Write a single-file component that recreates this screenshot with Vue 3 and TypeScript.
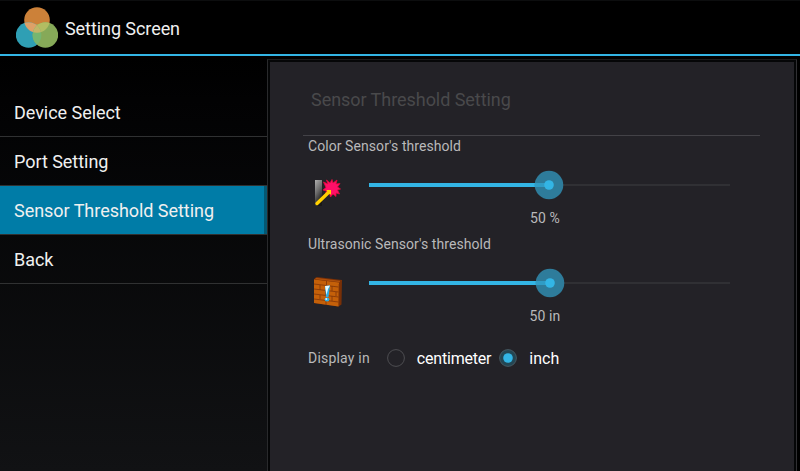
<script setup lang="ts">
import { ref } from 'vue'

interface Threshold {
  id: 'color' | 'ultrasonic'
  label: string
  fill: number
  value: string
}

const menu: string[] = ['Device Select', 'Port Setting', 'Sensor Threshold Setting', 'Back']
const selected = ref('Sensor Threshold Setting')
const units: string[] = ['centimeter', 'inch']
const unit = ref('inch')
const thresholds: Threshold[] = [
  { id: 'color', label: "Color Sensor's threshold", fill: 180, value: '50 %' },
  { id: 'ultrasonic', label: "Ultrasonic Sensor's threshold", fill: 181, value: '50 in' },
]
</script>

<template>
  <div class="screen">
    <header class="bar">
      <svg class="logo" width="42" height="42" viewBox="0 0 42 42">
        <circle cx="21" cy="13" r="12.8" fill="#cc8139" />
        <circle cx="12.6" cy="28" r="12.8" fill="#2f9fb4" />
        <circle cx="29.4" cy="28" r="12.8" fill="#86a958" />
        <clipPath id="top"><circle cx="21" cy="13" r="12.8" /></clipPath>
        <clipPath id="left"><circle cx="12.6" cy="28" r="12.8" /></clipPath>
        <g clip-path="url(#top)">
          <circle cx="12.6" cy="28" r="12.8" fill="#dda168" />
          <circle cx="29.4" cy="28" r="12.8" fill="#b2bd62" />
        </g>
        <g clip-path="url(#left)"><circle cx="29.4" cy="28" r="12.8" fill="#76b670" /></g>
        <g clip-path="url(#left)"><g clip-path="url(#top)"><circle cx="29.4" cy="28" r="12.8" fill="#c2b568" /></g></g>
      </svg>
      <h1>Setting Screen</h1>
    </header>
    <div class="body">
      <nav>
        <div v-for="m in menu" :key="m" class="item" :class="{ active: m === selected }" @click="selected = m">
          <span>{{ m }}</span>
        </div>
      </nav>
      <div class="frame">
        <main>
          <h2><span>Sensor Threshold Setting</span></h2>
          <section v-for="t in thresholds" :key="t.id" class="threshold">
            <div><span class="label">{{ t.label }}</span></div>
            <div class="control">
              <svg v-if="t.id === 'color'" class="icon" width="32" height="32" viewBox="0 0 32 32">
                <defs>
                  <linearGradient id="metal" x1="0" y1="0" x2=".4" y2="1">
                    <stop offset="0" stop-color="#b0b0b0" /><stop offset=".5" stop-color="#6c6c6c" /><stop offset="1" stop-color="#181818" />
                  </linearGradient>
                </defs>
                <path d="M3 3H10V29H3Z" fill="url(#metal)" />
                <path d="M11.5 5L16 7L14.5 3L18 6L20 2.5L21 6L25 3L24 7L28 6.5L25.5 10L28.5 12L25.5 13L27.5 17L24 16L24 19.5L21 17L18.5 20L17.5 16L13 18L14.5 14L11 13L14 10.5Z" fill="#ff0f68" stroke="#e8083c" stroke-width=".8" />
                <path d="M5 26.5L16.5 15.5" stroke="#ffd000" stroke-width="3.4" stroke-linecap="round" />
                <path d="M14.5 13H19V17.5L17.5 17L15 14.5Z" fill="#ffd000" />
              </svg>
              <svg v-else class="icon" width="32" height="32" viewBox="0 0 32 32">
                <path d="M2 4L5 2L30 5L29.5 29.5L26.5 31.5L2 28Z" fill="#793007" />
                <path d="M2 4.5L27 7.5L26.5 31.5L2 28Z" fill="#c46009" />
                <path d="M3.5 3.5L28 6.5" stroke="#ad4f0b" stroke-width="1.5" />
                <path d="M2 9L26.5 12M2 14L26.5 17M2 19L26.5 22M2 24L26.5 27M14.5 6V10M8 10V15M20 11V16M13.5 15V20M24 17V21M8 20V24M20 21V26M14 26V30M27.2 9V30" stroke="#803507" stroke-width=".8" fill="none" />
                <path d="M13 11L18 10.5L16.5 22H14Z" fill="#2baee5" /><path d="M13 11L18 10.5L16 14L14.5 20Z" fill="#e5faff" />
                <ellipse cx="15" cy="24.5" rx="2.4" ry="1.9" fill="#2baee5" /><circle cx="14.3" cy="24" r="1" fill="#d7f6ff" />
              </svg>
              <svg class="slider" width="380" height="32" viewBox="0 0 380 32">
                <rect x="9" y="15" width="361" height="2" fill="#303034" />
                <rect x="9" y="14" :width="t.fill" height="4" fill="#33b5e5" />
                <circle :cx="9 + t.fill" cy="16" r="14.3" fill="#2e7c9b" />
                <rect :x="t.fill - 5" y="14" width="14" height="4" fill="#309cc5" />
                <circle :cx="9 + t.fill" cy="16" r="4.8" fill="#33b5e5" />
              </svg>
            </div>
            <div class="value">{{ t.value }}</div>
          </section>
          <div class="units">
            <span class="display">Display in</span>
            <div v-for="u in units" :key="u" class="choice" :class="u" @click="unit = u">
              <svg width="20" height="20" viewBox="0 0 20 20">
                <circle cx="10" cy="10" r="8.4" :fill="unit === u ? '#234653' : 'none'" :stroke="unit === u ? '#465760' : '#4d4d51'" stroke-width="1" />
                <circle v-if="unit === u" cx="10" cy="10" r="4.8" fill="#33b5e5" />
              </svg>
              <span>{{ u }}</span>
            </div>
          </div>
        </main>
      </div>
    </div>
  </div>
</template>

<style>
body { margin: 0; background: #000; }
</style>

<style scoped>
.screen { box-sizing: border-box; width: 800px; height: 471px; overflow: hidden; display: flex; flex-direction: column; background: linear-gradient(#000 56px, #020203 100px, #111214 471px); font-family: Roboto, sans-serif; color: #f0f0f0; }
.bar { box-sizing: border-box; height: 56px; flex: none; display: flex; align-items: center; border-bottom: 2px solid #33b5e5; padding-left: 16px; background: #000; border-top: 1px solid #0c0d0e; }
.logo { margin-top: 0; }
h1 { font-size: 18px; font-weight: 400; margin: 2px 0 0 7px; letter-spacing: -.07px; white-space: nowrap; }
.body { display: flex; flex: 1; min-height: 0; }
nav { width: 267px; padding-top: 32px; flex: none; }
.item { box-sizing: border-box; height: 49px; border-bottom: 1px solid #303132; padding-left: 14px; display: flex; align-items: center; font-size: 18px; letter-spacing: -.04px; white-space: nowrap; }
.item span { padding-top: 1px; }
.active { background: linear-gradient(90deg, #007ca7 264px, #045873 264px); }
.frame { box-sizing: border-box; width: 530px; margin-top: 3px; border: 1px solid #303033; border-top-color: #1b1c1e; border-left-color: #292a2c; border-bottom: 0; padding: 2px 2px 0; background: #050607; box-shadow: 3px 0 #000; }
main { box-sizing: border-box; height: 100%; background: #232227; padding: 0 34px 0 33px; }
h2 { box-sizing: border-box; height: 74px; margin: 0; padding: 27px 0 0 8px; border-bottom: 1px solid #434247; font-size: 18px; font-weight: 400; line-height: 22px; color: #49494b; letter-spacing: -.05px; }
.threshold { height: 98px; padding-left: 5px; color: #b9b9ba; font-size: 14px; line-height: 20px; }
.label { letter-spacing: .07px; }
.control { height: 48px; display: flex; }
.icon { margin: 21px 0 0 4px; flex: none; }
.slider { margin: 13px 0 0 16px; flex: none; }
.value { padding-top: 4px; width: 474px; text-align: center; letter-spacing: .1px; }
.units { display: flex; height: 52px; align-items: center; padding-left: 5px; font-size: 14px; color: #b9b9ba; }
.display { letter-spacing: .2px; }
.choice { display: flex; align-items: center; font-size: 16px; color: #fff; }
.choice.centimeter { margin-left: 16px; letter-spacing: -.2px; }
.choice.inch { margin-left: 7px; }
.choice span { margin-left: 11px; }
</style>
